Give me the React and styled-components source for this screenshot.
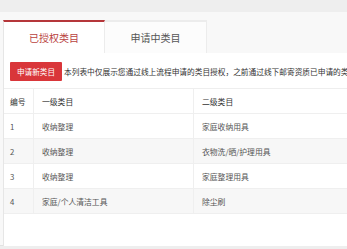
import React from "react";
import styled, { createGlobalStyle } from "styled-components";

const GlobalStyle = createGlobalStyle`
  html, body {
    margin: 0;
    padding: 0;
    background: #eeeeee;
    overflow: hidden;
  }
  body {
    font-family: "Noto Sans CJK SC", "Noto Sans", sans-serif;
    color: #333;
  }
`;

//outer page, gray band on top
const Page = styled.div`
  padding-top: 12px;
  width: 347px;
  height: 249px;
  box-sizing: border-box;
`;

//lighter area holding the tabs and the panel
const Wrapper = styled.div`
  background: #f8f8f8;
  padding: 8px 0 0 3px;
  height: 234px;
  box-sizing: border-box;
  border-bottom: 1px solid #e2e2e2;
`;

const TabBar = styled.div`
  display: flex;
  height: 33px;
`;

const Tab = styled.div`
  width: 102px;
  box-sizing: border-box;
  display: flex;
  align-items: center;
  justify-content: center;
  font-size: 10px;
  background: ${(p) => (p.active ? "#ffffff" : "#fcfcfc")};
  color: ${(p) => (p.active ? "#b9413e" : "#555555")};
  border-top: 2px solid ${(p) => (p.active ? "#b5363a" : "#ececec")};
  border-right: 1px solid #ececec;
  border-left: ${(p) => (p.active ? "1px solid #e6e6e6" : "none")};
`;

//white panel under the tabs
const Panel = styled.div`
  background: #ffffff;
  border-left: 1px solid #e6e6e6;
  height: 193px;
  padding: 9px 0 0 6px;
  box-sizing: border-box;
  overflow: hidden;
`;

const Notice = styled.div`
  display: flex;
  align-items: center;
  white-space: nowrap;
`;

const NewButton = styled.button`
  background: #d9363a;
  color: #ffffff;
  border: none;
  border-radius: 1px;
  height: 19px;
  width: 52px;
  padding: 0;
  font-family: inherit;
  font-size: 7.6px;
  flex-shrink: 0;
`;

const NoticeText = styled.span`
  font-size: 7.7px;
  color: #333;
  margin-left: 2px;
`;

const Table = styled.div`
  margin-top: 7px;
  margin-left: -6px;
  border-top: 1px solid #eeeeee;
`;

const Row = styled.div`
  display: grid;
  grid-template-columns: 30px 160px 1fr;
  height: 25px;
  background: ${(p) => (p.striped ? "#f7f7f7" : "#ffffff")};
  border-bottom: 1px solid #efefef;
  box-sizing: border-box;
  font-size: 7.8px;
  color: ${(p) => (p.head ? "#333" : "#555")};
`;

const Cell = styled.div`
  display: flex;
  align-items: center;
  padding-left: ${(p) => (p.first ? "6px" : "8px")};
  border-right: ${(p) => (p.last ? "none" : "1px solid #efefef")};
`;

const rows = [
  ["1", "收纳整理", "家庭收纳用具"],
  ["2", "收纳整理", "衣物洗/晒/护理用具"],
  ["3", "收纳整理", "家庭整理用具"],
  ["4", "家庭/个人清洁工具", "除尘刷"],
];

const App = () => {
  return (
    <Page>
      <GlobalStyle />
      <Wrapper>
        <TabBar>
          <Tab active>已授权类目</Tab>
          <Tab>申请中类目</Tab>
        </TabBar>
        <Panel>
          <Notice>
            <NewButton>申请新类目</NewButton>
            <NoticeText>
              本列表中仅展示您通过线上流程申请的类目授权，之前通过线下邮寄资质已申请的类目授权未在此列表中展示
            </NoticeText>
          </Notice>
          <Table>
            <Row head>
              <Cell first>编号</Cell>
              <Cell>一级类目</Cell>
              <Cell last>二级类目</Cell>
            </Row>
            {rows.map((r, i) => (
              <Row key={r[0]} striped={i % 2 === 1}>
                <Cell first>{r[0]}</Cell>
                <Cell>{r[1]}</Cell>
                <Cell last>{r[2]}</Cell>
              </Row>
            ))}
          </Table>
        </Panel>
      </Wrapper>
    </Page>
  );
};

export default App;
